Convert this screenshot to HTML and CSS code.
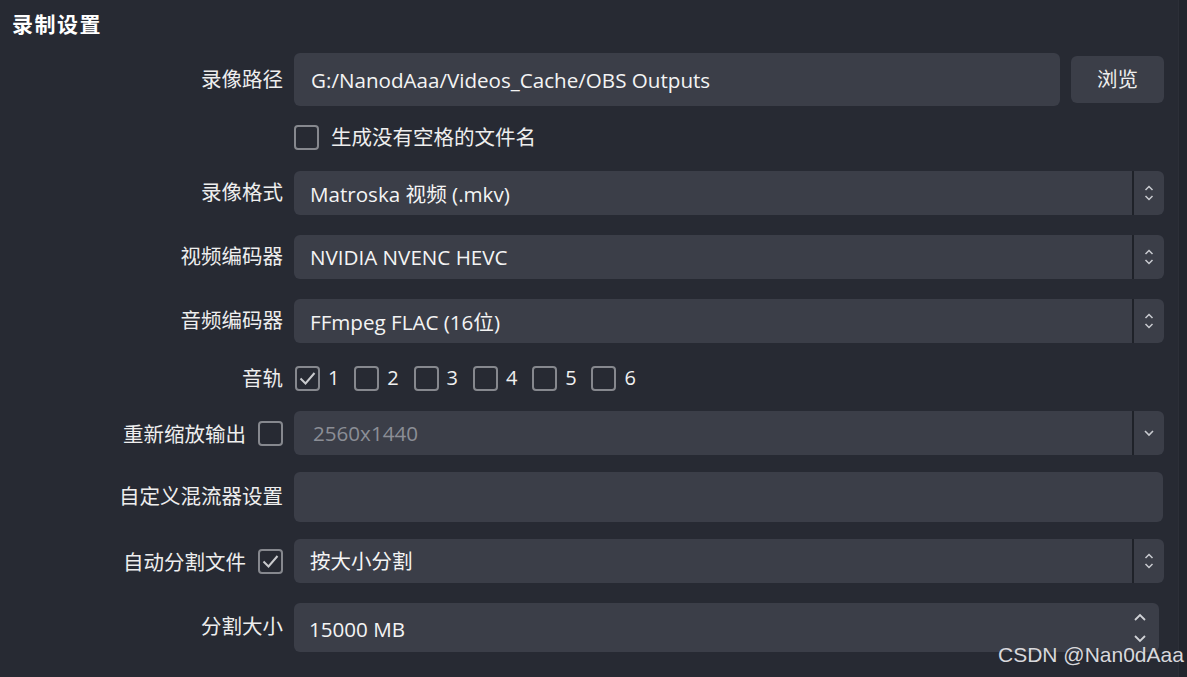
FILE: index.html
```html
<!DOCTYPE html>
<html lang="zh-CN">
<head>
<meta charset="utf-8">
<title>录制设置</title>
<link rel="stylesheet" href="styles.css">
</head>
<body>
<div class="window">
  <div class="content">
    <div class="title">录制设置</div>
    <div class="form">
      <div class="row h53">
        <div class="label">录像路径</div>
        <div class="field">
          <div class="input grow">G:/NanodAaa/Videos_Cache/OBS Outputs</div>
          <div class="button">浏览</div>
        </div>
      </div>
      <div class="row h25 m19">
        <div class="label"></div>
        <div class="field">
          <span class="check"></span>
          <span class="check-text">生成没有空格的文件名</span>
        </div>
      </div>
      <div class="row h44 m21">
        <div class="label">录像格式</div>
        <div class="field">
          <div class="combo">
            <div class="combo-text">Matroska 视频 (.mkv)</div>
            <div class="combo-arrows">
              <svg width="10" height="20" viewBox="0 0 10 20"><path d="M1.5 7 L5 3.5 L8.5 7" fill="none" stroke="#c9cbd0" stroke-width="1.5"/><path d="M1.5 13 L5 16.5 L8.5 13" fill="none" stroke="#c9cbd0" stroke-width="1.5"/></svg>
            </div>
          </div>
        </div>
      </div>
      <div class="row h44 m20">
        <div class="label">视频编码器</div>
        <div class="field">
          <div class="combo">
            <div class="combo-text">NVIDIA NVENC HEVC</div>
            <div class="combo-arrows">
              <svg width="10" height="20" viewBox="0 0 10 20"><path d="M1.5 7 L5 3.5 L8.5 7" fill="none" stroke="#c9cbd0" stroke-width="1.5"/><path d="M1.5 13 L5 16.5 L8.5 13" fill="none" stroke="#c9cbd0" stroke-width="1.5"/></svg>
            </div>
          </div>
        </div>
      </div>
      <div class="row h44 m20">
        <div class="label">音频编码器</div>
        <div class="field">
          <div class="combo">
            <div class="combo-text">FFmpeg FLAC (16位)</div>
            <div class="combo-arrows">
              <svg width="10" height="20" viewBox="0 0 10 20"><path d="M1.5 7 L5 3.5 L8.5 7" fill="none" stroke="#c9cbd0" stroke-width="1.5"/><path d="M1.5 13 L5 16.5 L8.5 13" fill="none" stroke="#c9cbd0" stroke-width="1.5"/></svg>
            </div>
          </div>
        </div>
      </div>
      <div class="row h25 m23">
        <div class="label">音轨</div>
        <div class="field tracks">
          <span class="track"><span class="check checked"><svg width="19" height="19" viewBox="0 0 19 19"><path d="M2.5 9.5 L7.5 14.5 L16.5 4" fill="none" stroke="#c9cacd" stroke-width="2"/></svg></span><span class="num">1</span></span>
          <span class="track"><span class="check"></span><span class="num">2</span></span>
          <span class="track"><span class="check"></span><span class="num">3</span></span>
          <span class="track"><span class="check"></span><span class="num">4</span></span>
          <span class="track"><span class="check"></span><span class="num">5</span></span>
          <span class="track"><span class="check"></span><span class="num">6</span></span>
        </div>
      </div>
      <div class="row h44 m20">
        <div class="label with-check"><span class="label-text">重新缩放输出</span><span class="check"></span></div>
        <div class="field">
          <div class="combo">
            <div class="combo-text disabled">2560x1440</div>
            <div class="combo-arrows">
              <svg width="12" height="20" viewBox="0 0 12 20"><path d="M2 8 L6 12 L10 8" fill="none" stroke="#c9cbd0" stroke-width="1.6"/></svg>
            </div>
          </div>
        </div>
      </div>
      <div class="row h50 m17">
        <div class="label">自定义混流器设置</div>
        <div class="field">
          <div class="input grow narrow"></div>
        </div>
      </div>
      <div class="row h44 m17">
        <div class="label with-check"><span class="label-text">自动分割文件</span><span class="check checked"><svg width="19" height="19" viewBox="0 0 19 19"><path d="M2.5 9.5 L7.5 14.5 L16.5 4" fill="none" stroke="#c9cacd" stroke-width="2"/></svg></span></div>
        <div class="field">
          <div class="combo">
            <div class="combo-text cjk">按大小分割</div>
            <div class="combo-arrows">
              <svg width="10" height="20" viewBox="0 0 10 20"><path d="M1.5 7 L5 3.5 L8.5 7" fill="none" stroke="#c9cbd0" stroke-width="1.5"/><path d="M1.5 13 L5 16.5 L8.5 13" fill="none" stroke="#c9cbd0" stroke-width="1.5"/></svg>
            </div>
          </div>
        </div>
      </div>
      <div class="row h49 m20 top">
        <div class="label label-top">分割大小</div>
        <div class="field">
          <div class="spin">
            <div class="spin-text">15000 MB</div>
            <div class="spin-arrows">
              <svg width="14" height="34" viewBox="0 0 14 34"><path d="M2 9 L7 4 L12 9" fill="none" stroke="#d0d2d6" stroke-width="1.8"/><path d="M2 25 L7 30 L12 25" fill="none" stroke="#d0d2d6" stroke-width="1.8"/></svg>
            </div>
          </div>
        </div>
      </div>
    </div>
  </div>
  <div class="scrollstrip"></div>
</div>
<div class="watermark">CSDN @Nan0dAaa</div>
</body>
</html>
```
FILE: styles.css
```css
html, body {
  margin: 0;
  padding: 0;
}
body {
  width: 1187px;
  height: 677px;
  overflow: hidden;
  background: #272a33;
  color: #f2f2f2;
  font-family: "Open Sans", "Noto Sans CJK SC", sans-serif;
  position: relative;
}
.window {
  display: flex;
  height: 677px;
}
.content {
  flex: 1;
  padding: 8px 14px 0 12px;
}
.scrollstrip {
  width: 8px;
  background: #22252d;
  border-left: 1px solid #2c2f38;
}
.title {
  font-family: "Noto Sans CJK SC", sans-serif;
  font-weight: 700;
  font-size: 21px;
  line-height: 30px;
  height: 30px;
  letter-spacing: 1.5px;
  color: #ffffff;
}
.form {
  margin-top: 15px;
  display: flex;
  flex-direction: column;
}
.row {
  display: grid;
  grid-template-columns: 271px 1fr;
  grid-template-rows: 100%;
  column-gap: 11px;
  align-items: center;
}
.h53 { height: 53px; }
.h25 { height: 25px; }
.h44 { height: 44px; }
.h49 { height: 49px; }
.h50 { height: 50px; }
.m17 { margin-top: 17px; }
.m19 { margin-top: 19px; }
.m20 { margin-top: 20px; }
.m21 { margin-top: 21px; }
.m23 { margin-top: 23px; }
.row.top { align-items: start; }
.label {
  font-family: "Noto Sans CJK SC", sans-serif;
  font-size: 20.5px;
  line-height: 20px;
  padding-bottom: 4px;
  text-align: right;
  color: #eeeeee;
  white-space: nowrap;
}
.label-top { margin-top: 12px; }
.label.with-check {
  display: flex;
  justify-content: flex-end;
  align-items: center;
  gap: 12px;
  padding-bottom: 0;
}
.label-text {
  padding-bottom: 1px;
}
.field {
  display: flex;
  align-items: center;
  height: 100%;
  min-width: 0;
}
.input {
  height: 100%;
  box-sizing: border-box;
  background: #3b3e48;
  border-radius: 6px;
  padding-left: 17px;
  display: flex;
  align-items: center;
  font-size: 20.6px;
  color: #f4f4f4;
}
.grow { flex: 1; }
.narrow { margin-right: 1px; }
.button {
  width: 93px;
  height: 47px;
  margin-left: 11px;
  background: #3b3e48;
  border-radius: 6px;
  display: flex;
  align-items: center;
  justify-content: center;
  padding-bottom: 3px;
  box-sizing: border-box;
  font-family: "Noto Sans CJK SC", sans-serif;
  font-size: 20.5px;
  color: #eeeeee;
}
.check {
  width: 25px;
  height: 25px;
  box-sizing: border-box;
  border: 2px solid #86888e;
  border-radius: 4px;
  display: inline-flex;
  align-items: center;
  justify-content: center;
  flex: none;
}
.check-text {
  margin-left: 12px;
  line-height: 20px;
  padding-bottom: 4px;
  font-family: "Noto Sans CJK SC", sans-serif;
  font-size: 20.5px;
  color: #eeeeee;
}
.track {
  display: inline-flex;
  align-items: center;
  width: 59.3px;
}
.track .check { margin-left: 1px; }
.num {
  margin-left: 8px;
  line-height: 20px;
  padding-bottom: 1px;
  font-size: 20px;
  color: #f0f0f0;
}
.combo {
  flex: 1;
  height: 100%;
  display: flex;
  background: #3b3e48;
  border-radius: 6px;
  overflow: hidden;
}
.combo-text {
  flex: 1;
  display: flex;
  align-items: center;
  padding-left: 16px;
  font-size: 20.6px;
  color: #f4f4f4;
  white-space: nowrap;
}
.combo-text.cjk {
  font-family: "Noto Sans CJK SC", sans-serif;
  font-size: 20.5px;
  padding-bottom: 3px;
}
.combo-text.disabled {
  color: #8b8e96;
  padding-left: 19px;
}
.combo-arrows {
  width: 30px;
  border-left: 2px solid #1f2229;
  display: flex;
  align-items: center;
  justify-content: center;
}
.spin {
  flex: 1;
  height: 100%;
  margin-right: 5px;
  display: flex;
  background: #3b3e48;
  border-radius: 6px;
}
.spin-text {
  flex: 1;
  display: flex;
  align-items: center;
  padding-left: 15px;
  padding-top: 2px;
  font-size: 20.6px;
  color: #f4f4f4;
}
.spin-arrows {
  width: 38px;
  display: flex;
  align-items: center;
  justify-content: center;
}
.watermark {
  position: absolute;
  left: 998px;
  top: 642px;
  font-family: "Liberation Sans", Arial, sans-serif;
  font-size: 21px;
  line-height: 26px;
  color: #d8d8dc;
  white-space: nowrap;
}
```
